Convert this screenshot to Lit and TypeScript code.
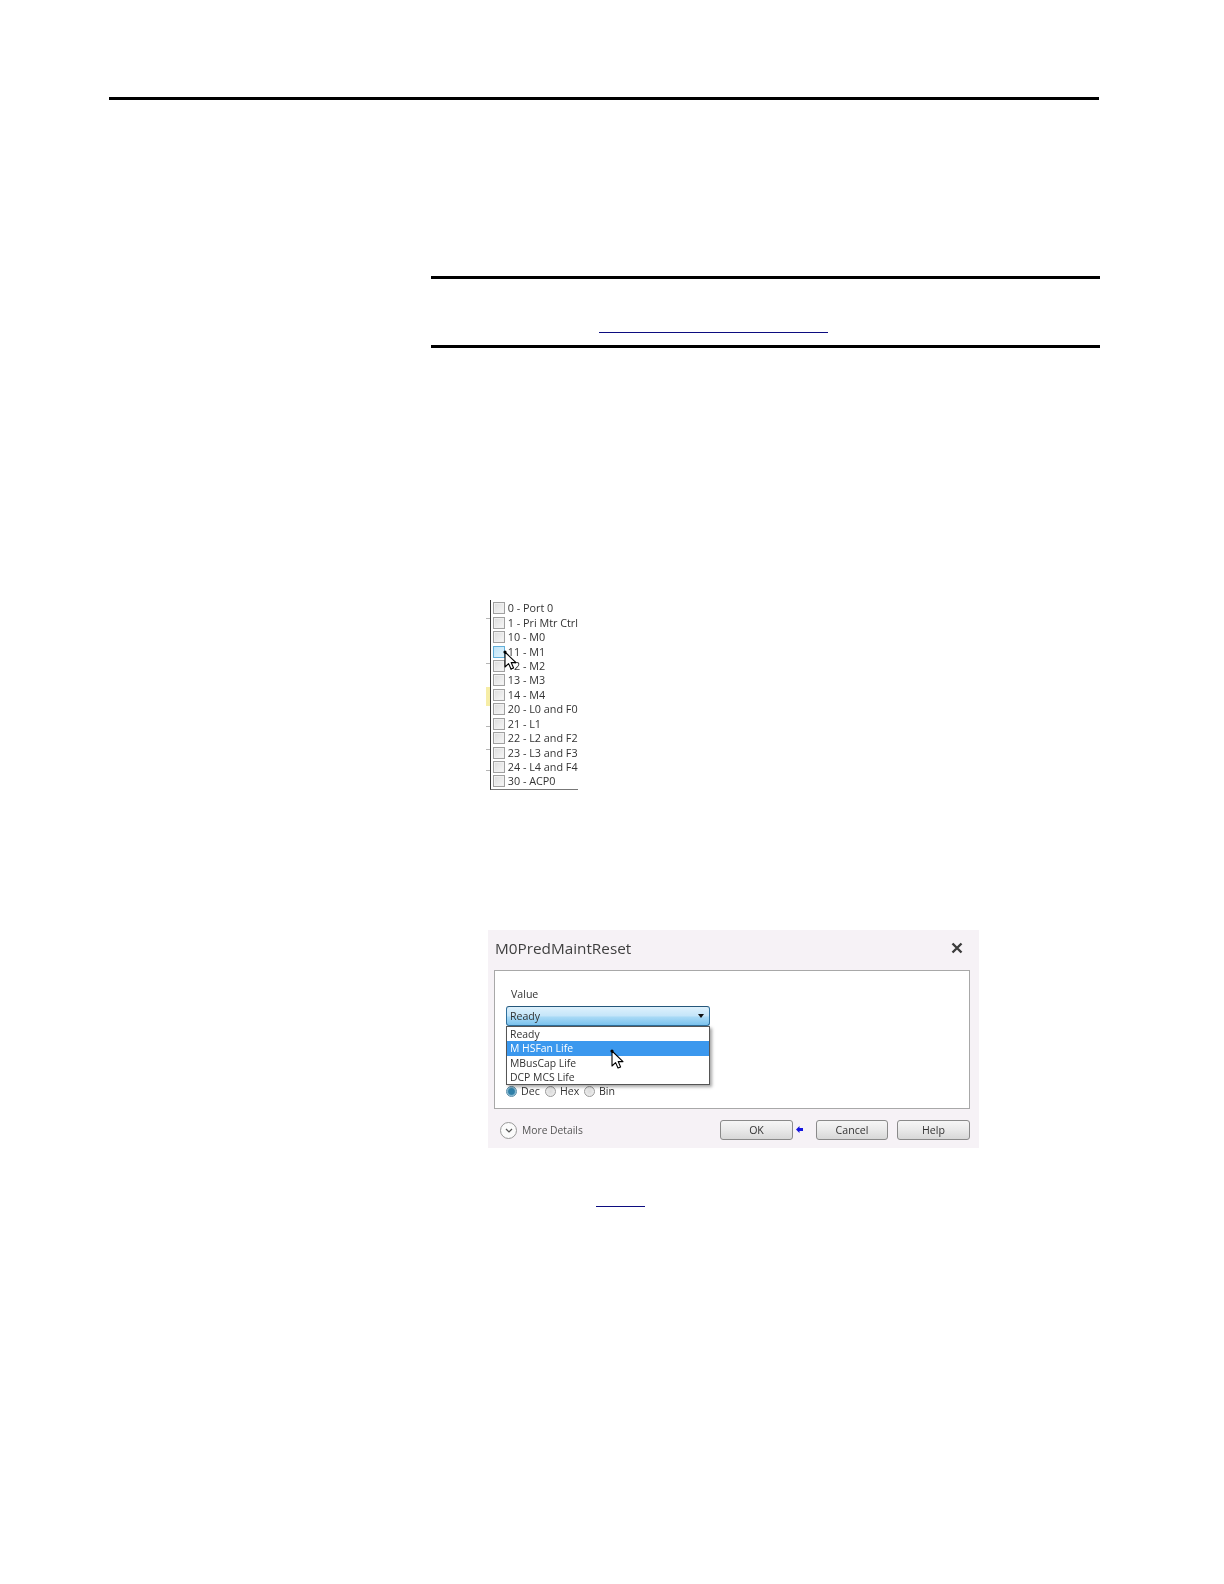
import { LitElement, html, css, svg } from "lit";
import { customElement } from "lit/decorators.js";

const ROWS = ["0 - Port 0", "1 - Pri Mtr Ctrl", "10 - M0", "11 - M1", "12 - M2", "13 - M3", "14 - M4", "20 - L0 and F0", "21 - L1", "22 - L2 and F2", "23 - L3 and F3", "24 - L4 and F4", "30 - ACP0"];
const OPTIONS = ["Ready", "M HSFan Life", "MBusCap Life", "DCP MCS Life"];

const pointer = svg`<path d="M1 1 V16 L4.6 12.6 L7 18 L9.6 16.9 L7.2 11.6 H12 Z" fill="#fff" stroke="#000" stroke-width="1.1" stroke-linejoin="round"/><circle cx="1" cy="1" r="1.6" fill="#000"/>`;

@customElement("app-root")
export class AppRoot extends LitElement {
  static styles = css`
    :host { display: block; width: 1224px; height: 1584px; background: #fff; overflow: hidden; font-family: "Open Sans", "Liberation Sans", sans-serif; color: #333; }
    .page { padding-top: 97px; }
    .top-rule { width: 990px; height: 3px; margin-left: 109px; background: #000; }
    .note { width: 669px; margin: 176px 0 0 431px; border-top: 3px solid #000; border-bottom: 3px solid #000; padding-top: 53px; height: 13px; }
    .note-link { width: 229px; height: 1px; margin-left: 168px; background: #0c0c80; }

    .list-fig { position: relative; display: flex; width: 92px; height: 190px; margin: 252px 0 0 486px; font-size: 10.8px; filter: blur(0.3px); }
    .gutter { width: 4px; display: flex; flex-direction: column; }
    .tick { height: 1px; background: #b5b5b5; }
    .t1 { margin-top: 18px; }
    .t2 { margin-top: 44px; }
    .mark { height: 19px; margin-top: 23px; background: #f6eda6; }
    .t3 { margin-top: 20px; }
    .t4 { margin-top: 22px; }
    .t5 { margin-top: 20px; }
    .rows { flex: 1; border-left: 1px solid #333; border-bottom: 1px solid #777; padding-top: 1px; display: grid; grid-auto-rows: 14.44px; }
    .row { display: flex; align-items: center; gap: 3px; padding-left: 2px; white-space: nowrap; line-height: 14px; }
    .box { width: 12px; height: 12px; box-sizing: border-box; border: 1px solid #a0a0a0; background: linear-gradient(135deg, #dcdcdc, #f8f8f8); box-shadow: inset 0 0 0 1px #f0f0f0; flex: none; }
    .box.hot { border-color: #63b0da; background: linear-gradient(135deg, #bfe4f8, #e2f4fd); box-shadow: none; }
    .cursor { position: absolute; width: 13px; height: 19px; overflow: visible; }
    .c-list { left: 18px; top: 51px; }
    .c-dlg { left: 123px; top: 120px; }

    .dialog { position: relative; width: 491px; height: 218px; margin: 140px 0 0 488px; background: #f6f2f6; font-size: 10.6px; filter: blur(0.3px); }
    .title { height: 40px; box-sizing: border-box; display: flex; align-items: center; justify-content: space-between; padding: 0 16px 5px 7px; font-size: 15.3px; color: #3f3f3f; }
    .close { width: 12px; height: 12px; }
    .panel { width: 476px; height: 139px; box-sizing: border-box; margin-left: 6px; padding-top: 16px; border: 1px solid #a8a8a8; background: #fff; }
    .label { line-height: 14px; margin: 0 0 5px 16px; }
    .combo-wrap { position: relative; width: 204px; margin-left: 11px; }
    .combo { height: 20px; box-sizing: border-box; display: flex; align-items: center; justify-content: space-between; padding: 0 5px 0 3px; border: 1px solid #2f6f9c; border-top-color: #25567a; border-radius: 3px; background: linear-gradient(#def1fc, #c4e5f9 50%, #a9daf6 55%, #7cc3ee); }
    .caret { width: 0; height: 0; border-left: 3px solid transparent; border-right: 3px solid transparent; border-top: 4px solid #111; }
    .menu { position: absolute; left: 0; right: 0; top: 20px; height: 59px; box-sizing: border-box; border: 1px solid #555; background: #fff; box-shadow: 2px 2px 3px rgba(0,0,0,.35); font-size: 10.4px; }
    .opt { height: 14.3px; line-height: 14.3px; padding-left: 3px; }
    .opt.on { background: #3b98ee; color: #fff; }
    .radios { display: flex; align-items: center; height: 14px; margin: 58px 0 0 11px; }
    .radio { width: 11px; height: 11px; border-radius: 50%; box-sizing: border-box; border: 1px solid #9a9a9a; background: radial-gradient(circle, #dcdcdc, #f2f2f2); margin-right: 4px; flex: none; }
    .radio.on { background: radial-gradient(circle, #2f7fa8 0 45%, #bcdcea 75%); border-color: #5a8da8; }
    .radio-txt { width: 20px; margin-right: 4px; }
    .foot { display: flex; align-items: flex-start; padding: 11px 9px 0 12px; }
    .more { display: flex; align-items: center; height: 20px; flex: 1; gap: 5px; color: #555; font-size: 10.3px; }
    .chev { width: 17px; height: 17px; box-sizing: border-box; border: 1px solid #999; border-radius: 50%; background: #fbfbfb; display: flex; align-items: center; justify-content: center; }
    .chev svg { width: 8px; height: 5px; }
    .btn { height: 20px; box-sizing: border-box; border: 1px solid #8a8a8a; border-radius: 3px; background: linear-gradient(#f6f6f6, #e9e9e9 50%, #d8d8d8); display: flex; align-items: center; justify-content: center; }
    .ok { width: 73px; }
    .arrow { width: 7px; height: 7px; margin: 6px 13px 0 3px; flex: none; }
    .cancel { width: 72px; margin-right: 9px; }
    .help { width: 73px; }
    .link2 { width: 49px; height: 1px; margin: 58px 0 0 596px; background: #0c0c80; }
  `;

  render() {
    return html`
      <div class="page">
        <div class="top-rule"></div>
        <div class="note"><div class="note-link"></div></div>

        <div class="list-fig">
          <div class="gutter">
            <div class="tick t1"></div>
            <div class="tick t2"></div>
            <div class="mark"></div>
            <div class="tick t3"></div>
            <div class="tick t4"></div>
            <div class="tick t5"></div>
          </div>
          <div class="rows">
            ${ROWS.map((r, i) => html`<div class="row"><span class="box ${i === 3 ? "hot" : ""}"></span><span>${r}</span></div>`)}
          </div>
          <svg class="cursor c-list" viewBox="0 0 13 19">${pointer}</svg>
        </div>

        <div class="dialog">
          <div class="title">
            <span>M0PredMaintReset</span>
            <svg class="close" viewBox="0 0 12 12"><path d="M1.5 1.5 L10.5 10.5 M10.5 1.5 L1.5 10.5" stroke="#3c3c3c" stroke-width="2.4" fill="none"/></svg>
          </div>
          <div class="panel">
            <div class="label">Value</div>
            <div class="combo-wrap">
              <div class="combo"><span>Ready</span><span class="caret"></span></div>
              <div class="menu">
                ${OPTIONS.map((o, i) => html`<div class="opt ${i === 1 ? "on" : ""}">${o}</div>`)}
              </div>
            </div>
            <div class="radios">
              <span class="radio on"></span><span class="radio-txt">Dec</span>
              <span class="radio"></span><span class="radio-txt">Hex</span>
              <span class="radio"></span><span class="radio-txt">Bin</span>
            </div>
          </div>
          <div class="foot">
            <div class="more">
              <span class="chev"><svg viewBox="0 0 8 5"><path d="M1 1 L4 4 L7 1" stroke="#555" stroke-width="1.2" fill="none"/></svg></span>
              <span>More Details</span>
            </div>
            <div class="btn ok">OK</div>
            <svg class="arrow" viewBox="0 0 7 7"><path d="M0 3.5 L3.5 0 V2 H7 V5 H3.5 V7 Z" fill="#1414e0"/></svg>
            <div class="btn cancel">Cancel</div>
            <div class="btn help">Help</div>
          </div>
          <svg class="cursor c-dlg" viewBox="0 0 13 19">${pointer}</svg>
        </div>

        <div class="link2"></div>
      </div>
    `;
  }
}
